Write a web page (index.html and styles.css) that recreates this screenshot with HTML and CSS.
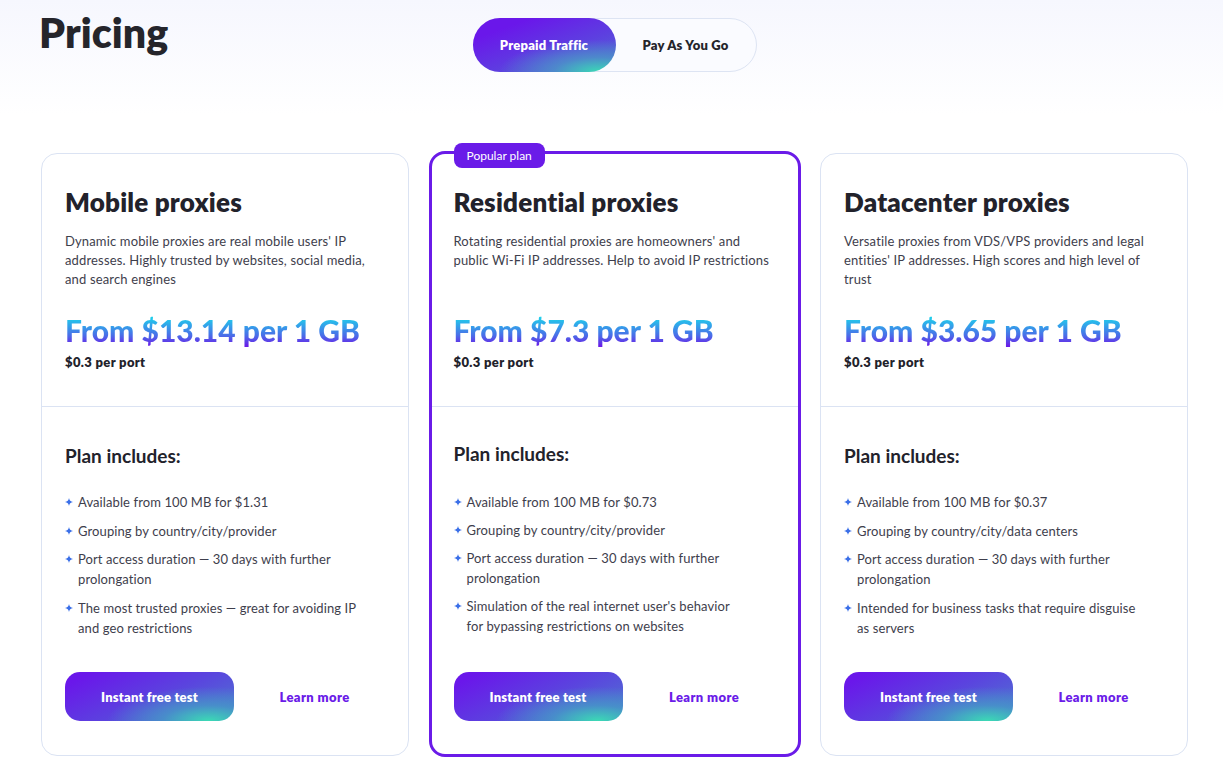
FILE: index.html
```html
<!DOCTYPE html>
<html lang="en">
<head>
<meta charset="utf-8">
<title>Pricing</title>
<link rel="stylesheet" href="styles.css">
</head>
<body>
<div class="page">
  <header class="header">
    <h1 class="title">Pricing</h1>
    <div class="toggle">
      <span class="toggle-opt active">Prepaid Traffic</span>
      <span class="toggle-opt">Pay As You Go</span>
    </div>
    <div></div>
  </header>

  <section class="cards">
    <article class="card">
      <div class="card-top">
        <h2 class="card-title">Mobile proxies</h2>
        <p class="card-desc">Dynamic mobile proxies are real mobile users' IP addresses. Highly trusted by websites, social media, and search engines</p>
        <div class="price">From $13.14 per 1 GB</div>
        <div class="port">$0.3 per port</div>
      </div>
      <div class="card-bottom">
        <h3 class="plan-title">Plan includes:</h3>
        <ul class="features">
          <li><svg class="star" viewBox="0 0 10 10"><path d="M5 0 Q5.6 4.4 10 5 Q5.6 5.6 5 10 Q4.4 5.6 0 5 Q4.4 4.4 5 0Z"/></svg>Available from 100 MB for $1.31</li>
          <li><svg class="star" viewBox="0 0 10 10"><path d="M5 0 Q5.6 4.4 10 5 Q5.6 5.6 5 10 Q4.4 5.6 0 5 Q4.4 4.4 5 0Z"/></svg>Grouping by country/city/provider</li>
          <li><svg class="star" viewBox="0 0 10 10"><path d="M5 0 Q5.6 4.4 10 5 Q5.6 5.6 5 10 Q4.4 5.6 0 5 Q4.4 4.4 5 0Z"/></svg>Port access duration — 30 days with further prolongation</li>
          <li><svg class="star" viewBox="0 0 10 10"><path d="M5 0 Q5.6 4.4 10 5 Q5.6 5.6 5 10 Q4.4 5.6 0 5 Q4.4 4.4 5 0Z"/></svg>The most trusted proxies — great for avoiding IP and geo restrictions</li>
        </ul>
        <div class="actions">
          <a class="btn">Instant free test</a>
          <a class="learn">Learn more</a>
        </div>
      </div>
    </article>

    <article class="card popular">
      <span class="badge">Popular plan</span>
      <div class="card-top">
        <h2 class="card-title">Residential proxies</h2>
        <p class="card-desc">Rotating residential proxies are homeowners' and public Wi-Fi IP addresses. Help to avoid IP restrictions</p>
        <div class="price">From $7.3 per 1 GB</div>
        <div class="port">$0.3 per port</div>
      </div>
      <div class="card-bottom">
        <h3 class="plan-title">Plan includes:</h3>
        <ul class="features">
          <li><svg class="star" viewBox="0 0 10 10"><path d="M5 0 Q5.6 4.4 10 5 Q5.6 5.6 5 10 Q4.4 5.6 0 5 Q4.4 4.4 5 0Z"/></svg>Available from 100 MB for $0.73</li>
          <li><svg class="star" viewBox="0 0 10 10"><path d="M5 0 Q5.6 4.4 10 5 Q5.6 5.6 5 10 Q4.4 5.6 0 5 Q4.4 4.4 5 0Z"/></svg>Grouping by country/city/provider</li>
          <li><svg class="star" viewBox="0 0 10 10"><path d="M5 0 Q5.6 4.4 10 5 Q5.6 5.6 5 10 Q4.4 5.6 0 5 Q4.4 4.4 5 0Z"/></svg>Port access duration — 30 days with further prolongation</li>
          <li><svg class="star" viewBox="0 0 10 10"><path d="M5 0 Q5.6 4.4 10 5 Q5.6 5.6 5 10 Q4.4 5.6 0 5 Q4.4 4.4 5 0Z"/></svg>Simulation of the real internet user's behavior for bypassing restrictions on websites</li>
        </ul>
        <div class="actions">
          <a class="btn">Instant free test</a>
          <a class="learn">Learn more</a>
        </div>
      </div>
    </article>

    <article class="card">
      <div class="card-top">
        <h2 class="card-title">Datacenter proxies</h2>
        <p class="card-desc">Versatile proxies from VDS/VPS providers and legal entities' IP addresses. High scores and high level of trust</p>
        <div class="price">From $3.65 per 1 GB</div>
        <div class="port">$0.3 per port</div>
      </div>
      <div class="card-bottom">
        <h3 class="plan-title">Plan includes:</h3>
        <ul class="features">
          <li><svg class="star" viewBox="0 0 10 10"><path d="M5 0 Q5.6 4.4 10 5 Q5.6 5.6 5 10 Q4.4 5.6 0 5 Q4.4 4.4 5 0Z"/></svg>Available from 100 MB for $0.37</li>
          <li><svg class="star" viewBox="0 0 10 10"><path d="M5 0 Q5.6 4.4 10 5 Q5.6 5.6 5 10 Q4.4 5.6 0 5 Q4.4 4.4 5 0Z"/></svg>Grouping by country/city/data centers</li>
          <li><svg class="star" viewBox="0 0 10 10"><path d="M5 0 Q5.6 4.4 10 5 Q5.6 5.6 5 10 Q4.4 5.6 0 5 Q4.4 4.4 5 0Z"/></svg>Port access duration — 30 days with further prolongation</li>
          <li><svg class="star" viewBox="0 0 10 10"><path d="M5 0 Q5.6 4.4 10 5 Q5.6 5.6 5 10 Q4.4 5.6 0 5 Q4.4 4.4 5 0Z"/></svg>Intended for business tasks that require disguise as servers</li>
        </ul>
        <div class="actions">
          <a class="btn">Instant free test</a>
          <a class="learn">Learn more</a>
        </div>
      </div>
    </article>
  </section>
</div>
</body>
</html>
```

FILE: styles.css
```css
* { box-sizing: border-box; }
html, body { margin: 0; padding: 0; }
body {
  font-family: "Lato", "Open Sans", sans-serif;
  color: #22222c;
  background: linear-gradient(180deg, #f6f7fe 0px, #ffffff 115px, #ffffff 100%);
  min-height: 771px;
}
.page {
  padding: 18px 35px 0 41px;
}
.header {
  display: grid;
  grid-template-columns: 1fr auto 1fr;
  align-items: start;
}
.title {
  margin: -9px 0 0 -2px;
  font-size: 41px;
  line-height: 48px;
  font-weight: 800;
  color: #25252b;
  letter-spacing: 0.1px;
}
.toggle {
  display: flex;
  height: 54px;
  width: 284px;
  border: 1px solid #dde4f3;
  border-radius: 27px;
  background: #fafbff;
}
.toggle-opt {
  flex: 1;
  display: flex;
  align-items: center;
  justify-content: center;
  font-size: 13px;
  font-weight: 800;
  color: #25252b;
  border-radius: 27px;
  letter-spacing: 0.2px;
}
.toggle-opt.active {
  flex: 0 0 143px;
  margin: -1px 0 -1px -1px;
  color: #fff;
  background: radial-gradient(ellipse 70% 60% at 88% 100%, #3ad9b6 0%, rgba(75,150,200,0.8) 45%, rgba(90,80,220,0) 100%),
              linear-gradient(160deg, #6a17ea 20%, #5d3fe0 60%, #4f6fd2 100%);
}
.cards {
  margin-top: 81px;
  display: grid;
  grid-template-columns: repeat(3, 1fr);
  gap: 21.5px;
  width: 1147px;
}
.card {
  position: relative;
  border: 1px solid #dbe3f3;
  border-radius: 16px;
  background: #fff;
  height: 603px;
  display: flex;
  flex-direction: column;
}
.card.popular {
  border: 3px solid #6a1be8;
  margin: -2px -2px 0;
  height: 606px;
}
.badge {
  position: absolute;
  top: -11px;
  left: 22px;
  height: 25px;
  padding: 0 13px;
  border-radius: 8px;
  background: #6a1be8;
  color: #fff;
  font-size: 12px;
  line-height: 25px;
}
.card-top {
  padding: 32px 23px 35px;
  border-bottom: 1px solid #dbe3f3;
}
.card.popular .card-top { padding: 32px 22px 35px; }
.card-title {
  margin: 0;
  font-size: 26px;
  line-height: 32px;
  font-weight: 800;
  color: #22222b;
  letter-spacing: 0.2px;
}
.card-desc {
  margin: 14px 0 0;
  font-size: 13px;
  line-height: 19px;
  min-height: 57px;
  color: #3e3e4c;
  letter-spacing: 0.15px;
}
.price {
  margin-top: 23px;
  font-size: 30px;
  line-height: 36px;
  font-weight: 900;
  background: linear-gradient(180deg, #1fcfeb 15%, #4a6ee8 65%, #6a1be8 95%);
  -webkit-background-clip: text;
  background-clip: text;
  color: transparent;
  width: max-content;
}
.port {
  margin-top: 5px;
  font-size: 13px;
  line-height: 18px;
  font-weight: 800;
  color: #22222b;
  letter-spacing: 0.35px;
}
.card-bottom {
  padding: 36px 23px 33px;
}
.card.popular .card-bottom { padding: 34px 22px 32px; }
.plan-title {
  margin: 0;
  font-size: 19px;
  line-height: 26px;
  font-weight: 700;
  color: #22222b;
}
.features {
  list-style: none;
  margin: 23px 0 0;
  padding: 0;
  height: 180px;
  display: flex;
  flex-direction: column;
  gap: 8.5px;
}
.card.popular .features { margin-top: 25px; gap: 8px; }
.features li {
  position: relative;
  padding-left: 13px;
  padding-right: 14px;
  font-size: 13px;
  line-height: 20px;
  color: #3e3e4c;
  letter-spacing: 0.1px;
}
.card.popular .features li { padding-right: 30px; }
.star {
  position: absolute;
  left: 0;
  top: 6px;
  width: 8px;
  height: 8px;
  fill: #3a6fe8;
}
.actions {
  display: flex;
  align-items: center;
}
.btn {
  display: flex;
  align-items: center;
  justify-content: center;
  width: 169px;
  height: 49px;
  border-radius: 15px;
  color: #fff;
  font-size: 13px;
  font-weight: 800;
  letter-spacing: 0.2px;
  background: radial-gradient(ellipse 60% 70% at 85% 100%, #3bdab5 0%, rgba(70,150,200,0.85) 45%, rgba(90,80,220,0) 100%),
              linear-gradient(155deg, #6a17ea 10%, #5a45de 55%, #4d7ad0 100%);
}
.learn {
  flex: 1;
  padding-left: 10px;
  text-align: center;
  font-size: 13px;
  font-weight: 800;
  color: #6a1be8;
  letter-spacing: 0.4px;
}
```
